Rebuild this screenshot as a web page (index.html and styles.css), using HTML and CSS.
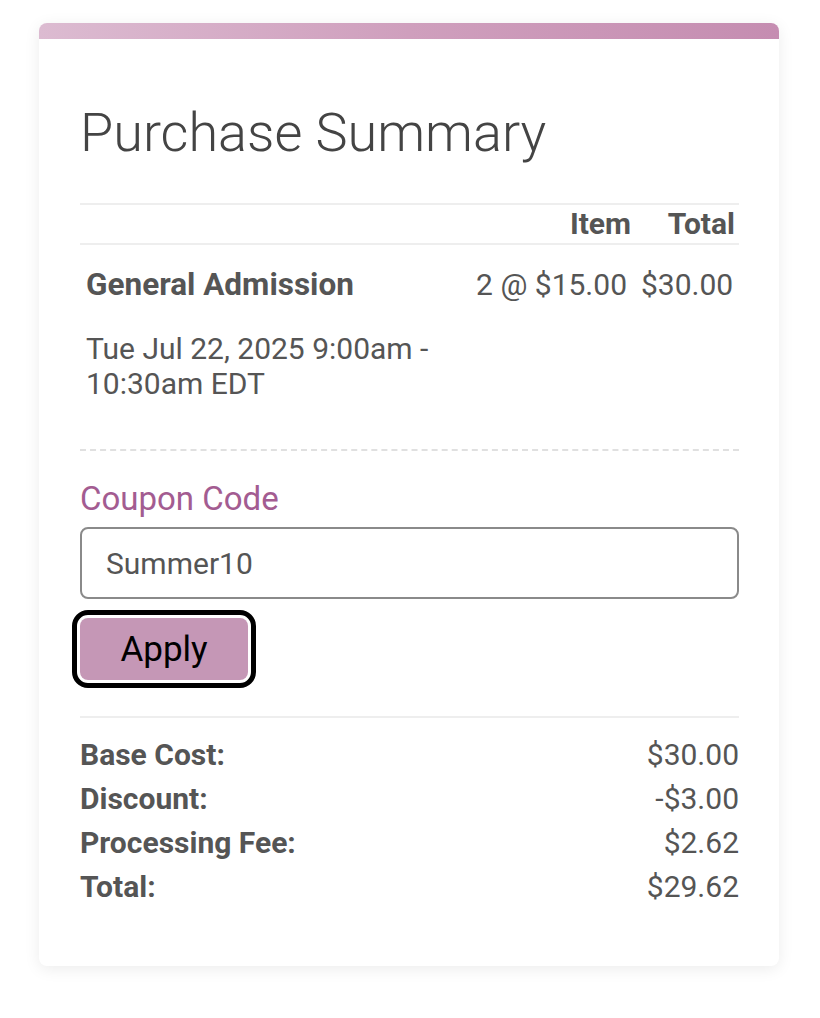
FILE: index.html
```html
<!DOCTYPE html>
<html>
<head>
<meta charset="utf-8">
<link rel="stylesheet" href="styles.css">
</head>
<body>
<div class="card">
  <div class="card-bar"></div>
  <div class="card-body">
    <h1 class="title">Purchase Summary</h1>
    <table class="items">
      <thead>
        <tr>
          <th class="col-name"></th>
          <th class="col-item">Item</th>
          <th class="col-total">Total</th>
        </tr>
      </thead>
      <tbody>
        <tr>
          <td class="col-name">
            <div class="ticket-name">General Admission</div>
            <div class="ticket-date">Tue Jul 22, 2025 9:00am - 10:30am EDT</div>
          </td>
          <td class="col-item">2 @ $15.00</td>
          <td class="col-total">$30.00</td>
        </tr>
      </tbody>
    </table>
    <div class="coupon">
      <label class="coupon-label" for="coupon">Coupon Code</label>
      <input class="coupon-input" id="coupon" type="text" value="Summer10">
      <button class="apply-btn" type="button">Apply</button>
    </div>
    <div class="totals">
      <div class="total-row"><span class="total-label">Base Cost:</span><span class="total-value">$30.00</span></div>
      <div class="total-row"><span class="total-label">Discount:</span><span class="total-value">-$3.00</span></div>
      <div class="total-row"><span class="total-label">Processing Fee:</span><span class="total-value">$2.62</span></div>
      <div class="total-row"><span class="total-label">Total:</span><span class="total-value">$29.62</span></div>
    </div>
  </div>
</div>
</body>
</html>
```
FILE: styles.css
```css
* { box-sizing: border-box; }
html, body { margin: 0; padding: 0; background: #ffffff; }
body {
  font-family: Roboto, "Liberation Sans", Arial, sans-serif;
  color: #555555;
  padding: 23px 41px 40px 39px;
}
.card {
  width: 740px;
  background: #ffffff;
  border-radius: 8px;
  box-shadow: 0 3px 16px rgba(0, 0, 0, 0.08);
  overflow: hidden;
}
.card-bar {
  height: 16px;
  background: linear-gradient(90deg, #dcbbd1 0%, #cf9fbd 50%, #c58db1 100%);
}
.card-body {
  padding: 62px 40px 57px 41px;
}
.title {
  margin: 0 0 38px 0;
  font-size: 54px;
  font-weight: 300;
  color: #444444;
  line-height: 64px;
}
.items {
  width: 100%;
  border-collapse: collapse;
  table-layout: fixed;
}
.items th {
  font-size: 30px;
  font-weight: 700;
  text-align: right;
  padding: 3px 4px 3px 4px;
  line-height: 32px;
  border-top: 2px solid #eeeeee;
  border-bottom: 2px solid #eeeeee;
}
.items td {
  vertical-align: top;
  font-size: 30px;
  padding: 22px 6px 48px 6px;
  line-height: 35px;
}
.items .col-name { width: 380px; text-align: left; }
.items .col-total { width: 104px; }
.items td.col-item { text-align: right; padding-right: 8px; }
.items td.col-total { text-align: right; }
.ticket-name { font-weight: 700; font-size: 31.5px; margin-bottom: 29px; }
.ticket-date { font-weight: 400; padding-right: 10px; }
.coupon {
  border-top: 2px dashed #e0e0e0;
  padding-top: 27px;
  padding-bottom: 36px;
  display: flex;
  flex-direction: column;
  align-items: flex-start;
}
.coupon-label {
  font-size: 33px;
  color: #a35c91;
  line-height: 42px;
  margin-bottom: 7px;
}
.coupon-input {
  width: 100%;
  height: 72px;
  border: 2px solid #8a8a8a;
  border-radius: 8px;
  font-family: Roboto, "Liberation Sans", Arial, sans-serif;
  font-size: 30px;
  color: #555555;
  padding: 0 24px;
  margin: 0 0 19px 0;
  outline: none;
}
.apply-btn {
  font-family: Roboto, "Liberation Sans", Arial, sans-serif;
  font-size: 35px;
  color: #000000;
  background: #c597b6;
  border: none;
  border-radius: 8px;
  width: 168px;
  height: 62px;
  padding: 0;
  outline: 5px solid #000000;
  outline-offset: 3px;
}
.totals {
  border-top: 2px solid #eeeeee;
  padding-top: 15px;
}
.total-row {
  display: flex;
  justify-content: space-between;
  font-size: 30px;
  line-height: 44px;
}
.total-label { font-weight: 700; }
.total-value { font-weight: 400; }
```
